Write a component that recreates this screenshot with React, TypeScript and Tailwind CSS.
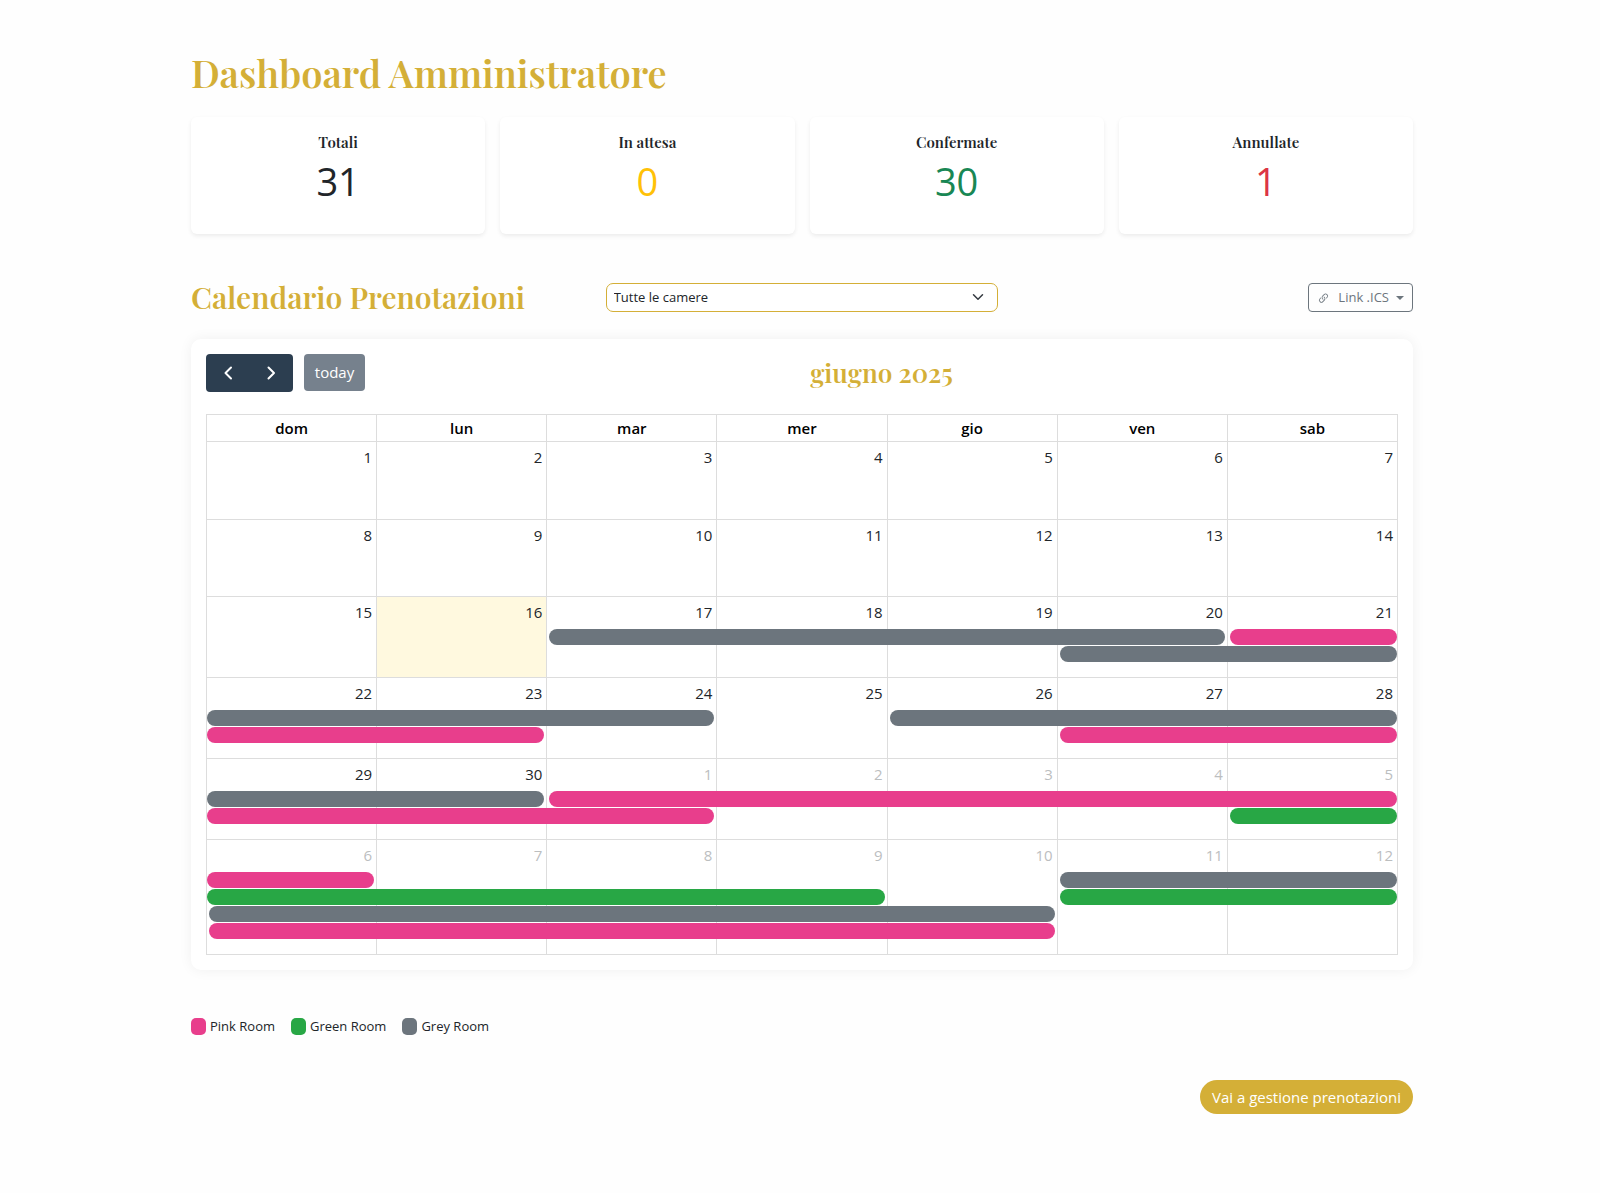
import React from "react";
import { BsLink45Deg } from "react-icons/bs";

const serif = "font-['Playfair_Display','Liberation_Serif',serif]";

const stats = [
  { label: "Totali", value: 31, color: "text-[#212529]" },
  { label: "In attesa", value: 0, color: "text-[#ffc107]" },
  { label: "Confermate", value: 30, color: "text-[#198754]" },
  { label: "Annullate", value: 1, color: "text-[#dc3545]" },
];

const colors = {
  pink: "bg-[#e83e8c]",
  green: "bg-[#28a745]",
  grey: "bg-[#6c757d]",
};

const rooms: { name: string; color: keyof typeof colors }[] = [
  { name: "Pink Room", color: "pink" },
  { name: "Green Room", color: "green" },
  { name: "Grey Room", color: "grey" },
];

const weekdays = ["dom", "lun", "mar", "mer", "gio", "ven", "sab"];

type Booking = {
  color: keyof typeof colors;
  lane: number;
  from: number;
  to: number;
  starts?: boolean;
  ends?: boolean;
};

type Week = { days: number[]; height: string; bookings: Booking[] };

const weeks: Week[] = [
  { days: [1, 2, 3, 4, 5, 6, 7], height: "h-[78px]", bookings: [] },
  { days: [8, 9, 10, 11, 12, 13, 14], height: "h-[77px]", bookings: [] },
  {
    days: [15, 16, 17, 18, 19, 20, 21],
    height: "h-[81px]",
    bookings: [
      { color: "grey", lane: 0, from: 2, to: 5, starts: true, ends: true },
      { color: "pink", lane: 0, from: 6, to: 6, starts: true },
      { color: "grey", lane: 1, from: 5, to: 6, starts: true },
    ],
  },
  {
    days: [22, 23, 24, 25, 26, 27, 28],
    height: "h-[81px]",
    bookings: [
      { color: "grey", lane: 0, from: 0, to: 2, ends: true },
      { color: "pink", lane: 1, from: 0, to: 1, ends: true },
      { color: "grey", lane: 0, from: 4, to: 6, starts: true },
      { color: "pink", lane: 1, from: 5, to: 6, starts: true },
    ],
  },
  {
    days: [29, 30, 1, 2, 3, 4, 5],
    height: "h-[81px]",
    bookings: [
      { color: "grey", lane: 0, from: 0, to: 1, ends: true },
      { color: "pink", lane: 1, from: 0, to: 2, ends: true },
      { color: "pink", lane: 0, from: 2, to: 6, starts: true },
      { color: "green", lane: 1, from: 6, to: 6, starts: true },
    ],
  },
  {
    days: [6, 7, 8, 9, 10, 11, 12],
    height: "h-[115px]",
    bookings: [
      { color: "pink", lane: 0, from: 0, to: 0, ends: true },
      { color: "green", lane: 1, from: 0, to: 3, ends: true },
      { color: "grey", lane: 2, from: 0, to: 4, starts: true, ends: true },
      { color: "pink", lane: 3, from: 0, to: 4, starts: true, ends: true },
      { color: "grey", lane: 0, from: 5, to: 6, starts: true },
      { color: "green", lane: 1, from: 5, to: 6, starts: true },
    ],
  },
];

function BookingBar({ booking }: { booking: Booking }) {
  const span = booking.to - booking.from + 1;
  const left = booking.starts ? 2 : 0;
  const right = booking.ends ? 2 : 0;
  return (
    <div
      className={`absolute z-10 h-4 rounded-full ${colors[booking.color]}`}
      style={{
        top: booking.lane * 17,
        left,
        width: `calc(${span * 100}% + ${span - 1 - left - right}px)`,
      }}
    />
  );
}

function StatCard({ label, value, color }: (typeof stats)[number]) {
  return (
    <div className="flex h-[117px] flex-col items-center rounded-md bg-white pt-[15px] shadow-[0_2px_4px_rgba(0,0,0,0.075)]">
      <h5 className={`${serif} text-[15px] leading-[20px] font-semibold text-[#212529]`}>{label}</h5>
      <p className={`mt-[5px] text-[38px] leading-[48px] ${color}`}>{value}</p>
    </div>
  );
}

function Chevron({ direction }: { direction: "left" | "right" }) {
  return (
    <svg viewBox="0 0 16 16" className="h-4 w-4" fill="none" stroke="currentColor" strokeWidth="2" strokeLinecap="round" strokeLinejoin="round" aria-hidden="true">
      <path d={direction === "left" ? "M11 2.500 5.500 8l5.500 5.500" : "M5.500 2.500 11 8l-5.500 5.500"} />
    </svg>
  );
}

function Calendar() {
  return (
    <section className="mt-[24px] rounded-[10px] bg-white p-[15px] shadow-[0_0_14px_rgba(0,0,0,0.06)]">
      <div className="flex items-center justify-between">
        <div className="flex items-start gap-[11px]">
          <div className="flex h-[38px] w-[87px] rounded-[4px] bg-[#2c3e50] text-white">
            <button type="button" aria-label="Mese precedente" className="flex flex-1 items-center justify-center">
              <Chevron direction="left" />
            </button>
            <button type="button" aria-label="Mese successivo" className="flex flex-1 items-center justify-center">
              <Chevron direction="right" />
            </button>
          </div>
          <button type="button" className="h-[37px] w-[61px] rounded-[4px] bg-[#76818d] text-[15px] text-white">
            today
          </button>
        </div>
        <h2 className={`${serif} text-[26px] leading-[34px] font-semibold text-[#d4af37]`}>giugno 2025</h2>
        <div />
      </div>
      <table className="mt-[22px] w-full table-fixed border-collapse">
        <thead>
          <tr className="h-[27px]">
            {weekdays.map((day) => (
              <th key={day} scope="col" className="border border-[#ddd] p-0 text-[15px] leading-[22px] font-semibold text-black">
                {day}
              </th>
            ))}
          </tr>
        </thead>
        <tbody>
          {weeks.map((week, w) => (
            <tr key={w} className={week.height}>
              {week.days.map((day, d) => {
                const otherMonth = w > 3 && day < 13;
                const today = w === 2 && day === 16;
                return (
                  <td key={d} className={`border border-[#ddd] p-0 align-top ${today ? "bg-[#fff9df]" : ""}`}>
                    <div className={`px-[4px] pt-[4px] text-right text-[15px] leading-[23px] ${otherMonth ? "text-[#bcbebf]" : "text-[#212529]"}`}>
                      {day}
                    </div>
                    <div className="relative mt-[5px]">
                      {week.bookings
                        .filter((b) => b.from === d)
                        .map((b) => (
                          <BookingBar key={b.lane} booking={b} />
                        ))}
                    </div>
                  </td>
                );
              })}
            </tr>
          ))}
        </tbody>
      </table>
    </section>
  );
}

export default function App() {
  return (
    <div className="min-h-screen bg-[#fefefe] pl-1 font-['Open_Sans',sans-serif] text-[#212529]">
      <main className="mx-auto max-w-[1222px] pt-[50px] pb-[78px]">
        <h1 className={`${serif} text-[38px] leading-[46px] font-semibold text-[#d4af37]`}>Dashboard Amministratore</h1>

        <div className="mt-[21px] grid grid-cols-4 gap-[15px]">
          {stats.map((s) => (
            <StatCard key={s.label} {...s} />
          ))}
        </div>

        <div className="mt-[45px] grid grid-cols-3 items-center gap-[22px]">
          <h2 className={`${serif} text-[30px] leading-[36px] font-semibold whitespace-nowrap text-[#d4af37]`}>Calendario Prenotazioni</h2>
          <div className="relative">
            <select aria-label="Camera" className="block h-[29px] w-full appearance-none rounded-[7px] border border-[#d4af37] bg-white px-[7px] pt-[2px] text-[13px] text-[#212529]">
              <option>Tutte le camere</option>
              <option>Pink Room</option>
              <option>Green Room</option>
              <option>Grey Room</option>
            </select>
            <svg viewBox="0 0 16 16" className="pointer-events-none absolute top-2 right-[14px] h-3 w-3" fill="none" stroke="#343a40" strokeWidth="2" strokeLinecap="round" strokeLinejoin="round" aria-hidden="true">
              <path d="m2 5 6 6 6-6" />
            </svg>
          </div>
          <button type="button" className="flex h-[29px] items-center justify-self-end rounded-[4px] border border-[#6c757d] px-[8px] pt-[2px] text-[13px] text-[#6c757d]">
            <BsLink45Deg className="mr-[8px] h-[13px] w-[13px]" aria-hidden="true" />
            Link .ICS
            <span className="ml-[7px] border-x-4 border-t-4 border-x-transparent border-t-[#6c757d]" />
          </button>
        </div>

        <Calendar />

        <ul className="mt-[46px] flex gap-[16px] text-[13px] leading-[20px]">
          {rooms.map((room) => (
            <li key={room.name} className="flex items-center gap-[4px]">
              <span className={`h-[17px] w-[15px] rounded-[5px] ${colors[room.color]}`} />
              {room.name}
            </li>
          ))}
        </ul>

        <div className="mt-[44px] flex justify-end">
          <a href="#prenotazioni" className="rounded-full bg-[#d4af37] px-[12px] py-[5px] text-[15px] leading-[24px] text-white">
            Vai a gestione prenotazioni
          </a>
        </div>
      </main>
    </div>
  );
}
